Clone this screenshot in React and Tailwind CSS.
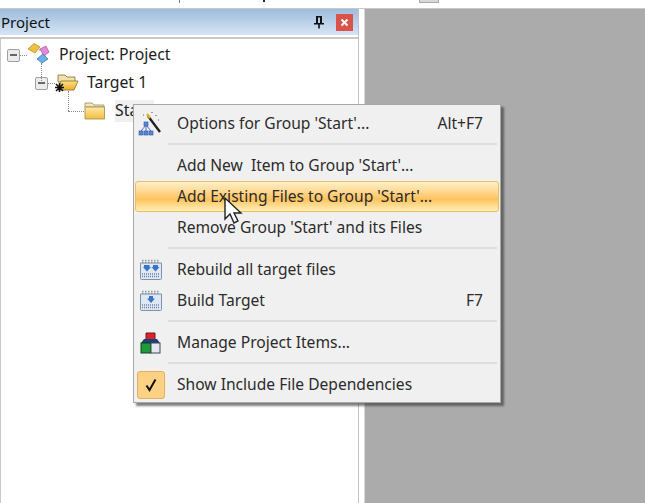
import React from 'react';

const font = { fontFamily: '"Noto Sans", "Open Sans", sans-serif' };

const Expander = () => (
  <span className="flex items-center justify-center w-[13px] h-[13px] border border-[#a0a0a0] rounded-[2px] bg-[#ececec]">
    <span className="w-[7px] h-[1.5px] bg-[#666]"></span>
  </span>
);

const ProjectIcon = () => (
  <svg width="24" height="24" viewBox="0 0 24 24">
    <path d="M12 7 L16 6 M18 12 L17 14" stroke="#888" strokeWidth="1" fill="none" />
    <path d="M1 6 L7 0.5 L13 4 L8 10 Z" fill="#f0c040" stroke="#b08a20" strokeWidth="0.7" />
    <path d="M13 6 L19 3 L22 9 L17 13 Z" fill="#e48ad8" stroke="#a050a0" strokeWidth="0.7" />
    <path d="M10 16 L16 11 L21 16 L15 20 Z" fill="#6cb0e8" stroke="#3070a8" strokeWidth="0.7" />
  </svg>
);

const OpenFolder = () => (
  <svg width="24" height="24" viewBox="0 0 24 24">
    <defs>
      <linearGradient id="openFront" x1="0" y1="0" x2="0" y2="1">
        <stop offset="0" stopColor="#fbe08a" />
        <stop offset="1" stopColor="#eeb028" />
      </linearGradient>
    </defs>
    <path d="M3 4 H10 L12 6 H20 V11 H3 Z" fill="#efe0b0" stroke="#8a6d20" strokeWidth="0.8" />
    <path d="M6 10 H23 L19 19 H3 Z" fill="url(#openFront)" stroke="#8a6d20" strokeWidth="0.8" />
    <path d="M1 13 L8 20 M8 13 L1 20 M4.5 12 V21 M0 16.5 H9" stroke="#111" strokeWidth="1.5" />
  </svg>
);

const Folder = () => (
  <svg width="22" height="20" viewBox="0 0 22 20">
    <defs>
      <linearGradient id="closedFront" x1="0" y1="0" x2="0" y2="1">
        <stop offset="0" stopColor="#fde9a8" />
        <stop offset="1" stopColor="#f3bd3c" />
      </linearGradient>
    </defs>
    <path d="M1 2 H8 L10 4 H20 V6 H1 Z" fill="#f2e6c4" stroke="#a08a50" strokeWidth="0.8" />
    <path d="M1 6 H20.5 V18 H1 Z" fill="url(#closedFront)" stroke="#a08a50" strokeWidth="0.8" />
  </svg>
);

const WandIcon = () => (
  <svg width="26" height="26" viewBox="0 0 26 26">
    <path d="M10 5 L22 21" stroke="#222" strokeWidth="2.4" />
    <path d="M9 3 L12 7" stroke="#e8b020" strokeWidth="2.4" />
    <path d="M14 1 v1 M18 4 v1 M5 4 h1 M20 9 h1" stroke="#666" strokeWidth="1.2" />
    <path d="M8 14 L3 20 M8 14 L8 20 M8 14 L13 20" stroke="#4a70c0" strokeWidth="1" />
    <rect x="6" y="11" width="4" height="4" fill="#5a86d8" stroke="#2f55a0" strokeWidth="0.6" />
    <rect x="1" y="20" width="4" height="4" fill="#5a86d8" stroke="#2f55a0" strokeWidth="0.6" />
    <rect x="6" y="20" width="4" height="4" fill="#5a86d8" stroke="#2f55a0" strokeWidth="0.6" />
    <rect x="11" y="20" width="4" height="4" fill="#5a86d8" stroke="#2f55a0" strokeWidth="0.6" />
  </svg>
);

const BuildIcon = ({ all }) => (
  <svg width="24" height="24" viewBox="0 0 24 24">
    <path d="M1.5 5 H22.5 V20.5 Q22.5 21.5 21.5 21.5 H2.5 Q1.5 21.5 1.5 20.5 Z" fill="#dde8f4" stroke="#7d93ad" />
    <path d="M3 2.5 H21 M3 4.5 H21" stroke="#8f9aa6" strokeWidth="1.3" strokeDasharray="1.5 1.5" />
    <path d="M3 16 H21 M3 18.5 H21" stroke="#6f80a0" strokeWidth="1.4" strokeDasharray="1 1" />
    {all ? (
      <>
        <path d="M5 7 H10.5 V9 H12 L8 13.5 L4 9 H5 Z" fill="#3a72c4" />
        <path d="M14 7 H19 V9 H20.5 L16.5 13.5 L12.5 9 H14 Z" fill="#3a72c4" />
      </>
    ) : (
      <path d="M10 7 H14 V9.5 H16 L12 14 L8 9.5 H10 Z" fill="#3a72c4" />
    )}
  </svg>
);

const ItemsIcon = () => (
  <svg width="24" height="24" viewBox="0 0 24 24">
    <path d="M7 2 H16 V11 H7 Z" fill="#d8252a" stroke="#7a1518" />
    <path d="M5 8 H18 L21 12 H2 Z" fill="#1d3f7a" />
    <rect x="2" y="12" width="10" height="10" fill="#1e9a3a" stroke="#14401f" />
    <rect x="12" y="12" width="9" height="10" fill="#e6e8ee" stroke="#40485a" />
  </svg>
);

const CheckBox = () => (
  <span className="flex items-center justify-center w-[28px] h-[28px] bg-[#fdd183] border border-[#e3b05f] rounded-[3px]">
    <svg width="14" height="14" viewBox="0 0 14 14">
      <path d="M2.5 7.5 L5.5 12 L11.5 1.5" fill="none" stroke="#111" strokeWidth="2" />
    </svg>
  </span>
);

const Separator = () => (
  <div className="flex items-center h-[11px] pb-[2px] pl-[34px] pr-[3px]">
    <div className="w-full h-[2px] bg-[#dedede]"></div>
  </div>
);

const MenuRow = ({ icon, label, shortcut, active }) => (
  <div
    className={`flex items-center h-[31px] text-[15.6px] text-[#2b2b2b] ${
      active
        ? 'mx-[1px] border border-[#eebd5e] rounded-[3px] bg-gradient-to-b from-[#fff0c8] via-[#fdc35c] via-60% to-[#fff0b8]'
        : 'mx-[2px]'
    }`}
  >
    <span className="flex items-center justify-center w-[30px] shrink-0">{icon}</span>
    <span className="flex-1 pl-[11px] whitespace-pre">{label}</span>
    {shortcut && <span className="pr-[15px]">{shortcut}</span>}
  </div>
);

const Cursor = () => (
  <svg className="absolute left-[89px] top-[91px]" width="22" height="30" viewBox="0 0 22 30">
    <path d="M2 2 V23 L7 18 L11 27 L15 25 L11 17 L18 17 Z" fill="#fff" stroke="#222" strokeWidth="1.4" />
  </svg>
);

const TreeRow = ({ indent, width, lines, expander, icon, label, gap, vertical, selected }) => (
  <div className="flex items-center h-[28px] relative" style={{ paddingLeft: indent }}>
    {vertical && (
      <span
        className="absolute top-[-6px] h-[20px] border-l border-dotted border-[#888]"
        style={{ left: vertical }}
      ></span>
    )}
    <span className="flex items-center shrink-0" style={{ width }}>
      {expander ? <Expander /> : null}
      <span className={`border-t border-dotted border-[#888] ${lines}`}></span>
    </span>
    {icon}
    <span
      className={`text-[15.8px] text-[#1c1c1c] whitespace-pre pb-[1px] ${selected ? 'bg-[#f0f0f0] h-[22px] leading-[21px] pr-[4px]' : ''}`}
      style={{ marginLeft: gap }}
    >
      {label}
    </span>
  </div>
);

export default function App() {
  return (
    <div className="relative flex flex-col w-[645px] h-[503px] overflow-hidden bg-[#ababab]" style={font}>
      <div className="flex h-[9px] bg-white border-b border-[#c8c8c8] shrink-0">
        <div className="w-[180px] h-[3px] border-r border-[#777]"></div>
        <div className="w-[85px] h-[2px] border-r-2 border-[#222]"></div>
        <div className="ml-[154px] w-[20px] h-[3px] bg-[#d8d8d8] border-x border-b border-[#aaa]"></div>
      </div>
      <div className="flex flex-1 min-h-0">
        <div className="flex flex-col w-[359px] bg-white border-r border-[#c4c4c4]">
          <div className="flex items-center justify-between h-[26px] pl-[1px] pr-[5px] bg-gradient-to-b from-[#9dbcdc] to-[#d6e5f4] text-[15px] text-[#111]">
            <span>Project</span>
            <div className="flex items-center gap-[11px]">
              <svg width="12" height="14" viewBox="0 0 12 14">
                <path d="M3 1 H9 V8 H11 V9.5 H1 V8 H3 Z M5 2.5 V8 H7 V2.5 Z M5.2 9.5 H6.8 V13.5 H5.2 Z" fill="#111" fillRule="evenodd" />
              </svg>
              <span className="flex items-center justify-center w-[17px] h-[17px] bg-[#d9534a]">
                <svg width="9" height="9" viewBox="0 0 9 9">
                  <path d="M1.5 1.5 L7.5 7.5 M7.5 1.5 L1.5 7.5" stroke="#fff" strokeWidth="2" />
                </svg>
              </span>
            </div>
          </div>
          <div className="flex-1 mt-[2px] pt-[2px] border-t-2 border-l border-[#c8c8c8]">
            <TreeRow indent={6} width={20} expander lines="w-[7px]" icon={<ProjectIcon />} label="Project: Project" gap={8} />
            <TreeRow indent={34} width={20} expander lines="w-[7px]" icon={<OpenFolder />} label="Target 1" gap={8} vertical={40} />
            <TreeRow indent={67} width={16} lines="w-[16px]" icon={<Folder />} label="Start" gap={9} vertical={67} selected />
          </div>
        </div>
        <div className="w-[6px] bg-white border-r border-[#d8d8d8]"></div>
      </div>

      {/* Context menu */}
      <div className="absolute left-[133px] top-[104px] w-[368px] h-[299px] pt-[3px] bg-[#f0f0f0] border border-[#a8a8a8] shadow-[3px_3px_2px_rgba(60,60,60,0.65)]">
        <MenuRow icon={<WandIcon />} label="Options for Group 'Start'..." shortcut="Alt+F7" />
        <Separator />
        <MenuRow label="Add New  Item to Group 'Start'..." />
        <MenuRow active label="Add Existing Files to Group 'Start'..." />
        <MenuRow label="Remove Group 'Start' and its Files" />
        <Separator />
        <MenuRow icon={<BuildIcon all />} label="Rebuild all target files" />
        <MenuRow icon={<BuildIcon />} label="Build Target" shortcut="F7" />
        <Separator />
        <MenuRow icon={<ItemsIcon />} label="Manage Project Items..." />
        <Separator />
        <MenuRow icon={<CheckBox />} label="Show Include File Dependencies" />
        <Cursor />
      </div>
    </div>
  );
}
